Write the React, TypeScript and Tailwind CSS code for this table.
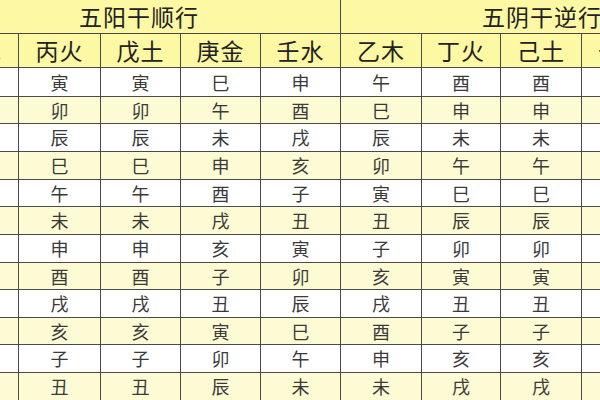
const yang = ['甲木', '丙火', '戊土', '庚金', '壬水']
const yin = ['乙木', '丁火', '己土', '辛金', '癸水']

// 十二长生 order for each stem
const columns: string[][] = [
  ['亥', '子', '丑', '寅', '卯', '辰', '巳', '午', '未', '申', '酉', '戌'],
  ['寅', '卯', '辰', '巳', '午', '未', '申', '酉', '戌', '亥', '子', '丑'],
  ['寅', '卯', '辰', '巳', '午', '未', '申', '酉', '戌', '亥', '子', '丑'],
  ['巳', '午', '未', '申', '酉', '戌', '亥', '子', '丑', '寅', '卯', '辰'],
  ['申', '酉', '戌', '亥', '子', '丑', '寅', '卯', '辰', '巳', '午', '未'],
  ['午', '巳', '辰', '卯', '寅', '丑', '子', '亥', '戌', '酉', '申', '未'],
  ['酉', '申', '未', '午', '巳', '辰', '卯', '寅', '丑', '子', '亥', '戌'],
  ['酉', '申', '未', '午', '巳', '辰', '卯', '寅', '丑', '子', '亥', '戌'],
  ['子', '亥', '戌', '酉', '申', '未', '午', '巳', '辰', '卯', '寅', '丑'],
  ['卯', '寅', '丑', '子', '亥', '戌', '酉', '申', '未', '午', '巳', '辰'],
]

const rows = Array.from({ length: 12 }, (_, r) => columns.map((c) => c[r]))

export default function App() {
  return (
    <div
      className="w-[600px] h-[400px] overflow-hidden bg-white"
      style={{ fontFamily: '"Noto Sans CJK SC", "Noto Sans", sans-serif' }}
    >
      <div className="-ml-[62px] w-max grid grid-cols-[80px_81px_79px_79px_79px_80px_78px_80px_80px_80px] grid-rows-[33px_33px_28px_26px_27px_27px_26px_27px_27px_26px_27px_26px_27px_27px] gap-px bg-[#4a4a4a]">
        {/* title row */}
        <div className="col-span-5 bg-[#fdf8a3] flex items-center justify-center text-[23px] text-[#222] tracking-[1px]">
          五阳干顺行
        </div>
        <div className="col-span-5 bg-[#fdf8a3] flex items-center justify-center text-[23px] text-[#222] tracking-[1px]">
          五阴干逆行
        </div>

        {/* stem headers */}
        {[...yang, ...yin].map((s, i) => (
          <div key={i} className="bg-[#fdf8a3] flex items-center justify-center text-[23px] text-[#222] tracking-[1px]">
            {s}
          </div>
        ))}

        {/* branches */}
        {rows.map((row, r) =>
          row.map((b, c) => (
            <div
              key={`${r}-${c}`}
              className={`${r % 2 === 1 ? 'bg-[#fdfbd3]' : 'bg-white'} flex items-center justify-center text-[18px] text-[#3a3a3a]`}
            >
              {b}
            </div>
          ))
        )}
      </div>
    </div>
  )
}
